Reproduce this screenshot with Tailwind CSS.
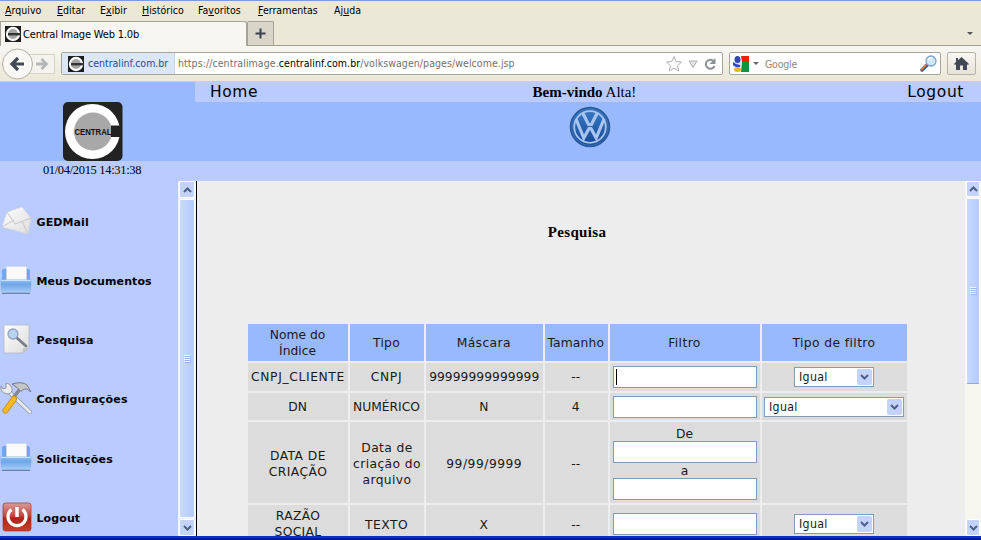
<!DOCTYPE html>
<html lang="pt-BR">
<head>
<meta charset="utf-8">
<title>Central Image Web 1.0b</title>
<script src="https://cdn.jsdelivr.net/npm/@tailwindcss/browser@4"></script>
</head>
<body class="w-[981px] h-[540px] overflow-hidden bg-[#ededed] text-black font-['DejaVu_Sans',sans-serif]">
<svg class="absolute w-0 h-0">
  <defs>
    <linearGradient id="tray" x1="0" y1="0" x2="0" y2="1"><stop offset="0" stop-color="#8fbdf2"/><stop offset=".4" stop-color="#6ea6e8"/><stop offset="1" stop-color="#a4cdf8"/></linearGradient>
    <linearGradient id="red" x1="0" y1="0" x2="0" y2="1"><stop offset="0" stop-color="#dc9a98"/><stop offset=".45" stop-color="#c04a42"/><stop offset=".55" stop-color="#b02418"/><stop offset="1" stop-color="#c8402c"/></linearGradient>
    <linearGradient id="vw" x1="0" y1="0" x2="0" y2="1"><stop offset="0" stop-color="#3a7cc4"/><stop offset="1" stop-color="#14499a"/></linearGradient>
    <linearGradient id="paper" x1="0" y1="0" x2="1" y2="1"><stop offset="0" stop-color="#ffffff"/><stop offset="1" stop-color="#dcdcdc"/></linearGradient>
    <symbol id="favicon" viewBox="0 0 16 16"><rect width="16" height="16" fill="#1d1d1d"/><circle cx="8" cy="8" r="7.2" fill="#fff"/><circle cx="8" cy="8" r="5" fill="#a5a5a5"/><path d="M3 7h13v2.4H3z" fill="#333"/></symbol>
    <symbol id="inbox" viewBox="0 0 32 30"><path d="M2 6q0-2 2-2h24q2 0 2 2v12H2z" fill="#6fa8ea"/><path d="M6.500 1.500h20v16h-20z" fill="#fafafa" stroke="#d0d6e0" stroke-width=".6"/><path d="M.5 14.500h31l-.5 11q0 2-2 2H3q-2 0-2-2z" fill="url(#tray)"/><path d="M1 15.500h30" stroke="#c9e2fc"/><path d="M2 28.300h28" stroke="#64789c" stroke-width="1.200"/></symbol>
    <symbol id="up" viewBox="0 0 9 6"><path d="M1 5l3.500-3.500L8 5" fill="none" stroke="#4d6185" stroke-width="2"/></symbol>
    <symbol id="down" viewBox="0 0 9 6"><path d="M1 1l3.500 3.500L8 1" fill="none" stroke="#4d6185" stroke-width="2"/></symbol>
  </defs>
</svg>

<div class="flex flex-col h-[540px]">
  <div class="h-px bg-[#7d9bd8] shrink-0"></div>
  <!-- Browser chrome -->
  <nav class="h-5 shrink-0 bg-[#ebe8d7] font-['DejaVu_Sans_Condensed','DejaVu_Sans',sans-serif] text-[10.5px] leading-[19px]">
    <ul class="flex pl-[5px] tracking-[0.03px]">
      <li class="w-[52px]"><u>A</u>rquivo</li><li class="w-[43px]"><u>E</u>ditar</li><li class="w-[42px]">E<u>x</u>ibir</li><li class="w-[56px]"><u>H</u>istórico</li><li class="w-[60px]">Fa<u>v</u>oritos</li><li class="w-[76px]"><u>F</u>erramentas</li><li>Aj<u>u</u>da</li>
    </ul>
  </nav>
  <div class="flex h-[25px] shrink-0 bg-[#ebe8d7] border-b border-[#a3a08f] font-['DejaVu_Sans_Condensed','DejaVu_Sans',sans-serif]">
    <div class="flex items-center w-[247px] h-[25px] pl-[4px] gap-[2px] bg-[#f7f6f1] border border-b-0 border-[#a5a297] rounded-tr-[3px]">
      <svg class="size-4"><use href="#favicon"/></svg>
      <span class="text-[11px] tracking-[-0.18px] pt-[3px]">Central Image Web 1.0b</span>
    </div>
    <div class="flex items-center justify-center w-[27px] h-[24px] bg-[#d9d6c9] border border-b-0 border-[#a5a297] rounded-t-[2px]">
      <svg class="size-[11px]" viewBox="0 0 11 11"><path d="M5.500.5v10M.5 5.500h10" stroke="#3c424c" stroke-width="2"/></svg>
    </div>
    <svg class="ml-auto mr-[8px] mt-[11px] w-[6px] h-[3px]" viewBox="0 0 6 3"><path d="M0 0h6L3 3z" fill="#555"/></svg>
  </div>
  <div class="flex items-center h-[36px] shrink-0 bg-linear-to-b from-[#f7f6f1] to-[#ebe8d7] border-b border-[#d4cfae] pl-[2px] font-['DejaVu_Sans_Condensed','DejaVu_Sans',sans-serif]">
    <svg class="w-[54px] h-[34px] shrink-0" viewBox="0 0 54 34"><path d="M26 7.500h26.500v19H26" fill="#f4f3ee" stroke="#d5d2c6"/><circle cx="15.500" cy="17" r="15" fill="#f9f8f5" stroke="#b3b0a6"/><path d="M22 17H11M16 11l-6 6 6 6" fill="none" stroke="#414a59" stroke-width="3.200"/><path d="M34 17h9M39.500 12l5 5-5 5" fill="none" stroke="#b5b6b7" stroke-width="2.800"/></svg>
    <div class="flex items-center ml-[5px] w-[662px] h-[23px] bg-white border border-[#a5a49d] rounded-[2px] text-[10.5px]">
      <div class="flex items-center h-full w-[113px] pl-[6px] gap-1 bg-[#dbe6f7] border-r border-[#c3d3ec] text-[#2c4b87]"><svg class="size-4 shrink-0"><use href="#favicon"/></svg><span class="pt-px">centralinf.com.br</span></div>
      <div class="pl-[3px] pt-px tracking-[0.07px] text-[#707070] whitespace-nowrap"><span>https://centralimage.</span><span class="text-black">centralinf.com.br</span><span>/volkswagen/pages/welcome.jsp</span></div>
      <svg class="ml-auto mr-[5px] w-[52px] h-[18px]" viewBox="0 0 52 18"><path d="M9 1.500l2.200 5 5.300.5-4 3.700 1.200 5.300L9 13.200 4.300 16l1.200-5.300-4-3.700 5.300-.5z" fill="#fafafa" stroke="#b0b0b0"/><path d="M24 6h8l-4 6.500z" fill="#e4e4e4" stroke="#b0b0b0"/><path d="M48.500 6A4.500 4.500 0 1 0 49.500 11" fill="none" stroke="#8b9097" stroke-width="2"/><path d="M50.500 3v6h-6z" fill="#8b9097"/></svg>
    </div>
    <div class="flex items-center ml-[6px] w-[212px] h-[23px] pl-[3px] bg-white border border-[#a5a49d] rounded-[2px]">
      <svg class="size-4 shrink-0" viewBox="0 0 16 16"><path d="M8 0h8v6H9z" fill="#f02010"/><path d="M9 6h7v10H8z" fill="#149040"/><path d="M0 6h8v5H0z" fill="#d4e2f8"/><ellipse cx="4.500" cy="3.500" rx="3" ry="3.500" fill="#2350b4"/><path d="M0 6l3 2 4 1v2H3L0 9z" fill="#2350b4"/><ellipse cx="4.500" cy="13.500" rx="3.500" ry="2.500" fill="#f2b41c"/></svg>
      <svg class="ml-1 w-[6px] h-[3px]" viewBox="0 0 6 3"><path d="M0 0h6L3 3z" fill="#666"/></svg>
      <span class="ml-[6px] pt-[2px] text-[10.5px] tracking-[-0.2px] text-[#8a8876]">Google</span>
      <svg class="ml-auto mr-[3px] size-[17px]" viewBox="0 0 17 17"><path d="M7 10l-5 5" stroke="#3e4a8c" stroke-width="3.500" stroke-linecap="round"/><path d="M6 10l-4.500 4.500" stroke="#e07840" stroke-width="2" stroke-linecap="round"/><circle cx="11" cy="6" r="5" fill="#cfe8fc" stroke="#7ba0d4" stroke-width="1.300"/><path d="M8 5q1-2.500 4-2.500" stroke="#fff" stroke-width="1.500" fill="none"/></svg>
    </div>
    <div class="flex items-center justify-center ml-[6px] w-[29px] h-[23px] bg-linear-to-b from-[#f8f7f3] to-[#e6e3d8] border border-[#b5b2a6] rounded-[2px]">
      <svg class="w-[15px] h-[13px]" viewBox="0 0 15 13"><path d="M7.500 0L15 7l-1 1-1-.8V13H9V8.500H6V13H2V7.200L1 8 0 7l2-1.900V1h2v2.200z" fill="#414856"/></svg>
    </div>
  </div>

  <!-- Page header -->
  <header class="flex h-[99px] shrink-0">
    <div class="w-[195px] flex flex-col bg-[#99b9ff]">
      <svg class="ml-[63px] mt-[20px] w-[60px] h-[59px] shrink-0" viewBox="0 0 60 59"><rect width="59.500" height="59" rx="5" fill="#222"/><circle cx="29.500" cy="29.500" r="27.500" fill="#fff"/><circle cx="30" cy="29.500" r="19" fill="#a8a8a8"/><path d="M48 23.500h11V35H48z" fill="#222"/><text x="11.500" y="33" textLength="37" lengthAdjust="spacingAndGlyphs" font-family="Liberation Sans" font-weight="bold" font-size="9.500" fill="#111">CENTRAL</text></svg>
      <div class="h-5 bg-[#b9cbff] text-center pr-[11px] leading-[18px] text-[12.5px] tracking-[-0.33px] font-['Liberation_Serif',serif]">01/04/2015 14:31:38</div>
    </div>
    <div class="flex-1 flex flex-col bg-[#99b9ff]">
      <div class="grid grid-cols-3 h-5 bg-[#b9cbff] pl-[15px] pr-[17px] leading-[21px] text-[15.5px] tracking-[0.6px]">
        <span>Home</span>
        <span class="text-center pr-[5px] tracking-normal font-['Liberation_Serif',serif] text-[15px]"><b>Bem-vindo</b> Alta!</span>
        <span class="text-right">Logout</span>
      </div>
      <svg class="mx-auto mt-1 relative left-[2px] size-[42px] shrink-0" viewBox="0 0 42 42"><circle cx="21" cy="21" r="20.300" fill="#28589c"/><circle cx="21" cy="21" r="18.300" fill="url(#vw)" stroke="#3c70b4" stroke-width="1"/><circle cx="21" cy="21" r="15.800" fill="none" stroke="#a9c4ee" stroke-width="1.800"/><path d="M13.800 7l5.700 11.500h3L28.200 7M7 13l7.800 19L20 22.500h2L27.200 32 35 13" fill="none" stroke="#a9c4ee" stroke-width="3.200"/></svg>
      <div class="h-5 mt-auto bg-[#b9cbff] shrink-0"></div>
    </div>
  </header>

  <main class="flex h-[355px] shrink-0">
    <aside class="w-[178px] bg-[#b9cbff] text-[11px] font-bold tracking-[0.1px] pt-[10px] overflow-hidden">
      <ul>
        <li class="flex items-center h-[59.2px] gap-[4.5px]"><svg class="w-8 h-[32px]" viewBox="0 0 32 32"><path d="M7 7L22 2l9 11-3 16L2 22z" fill="url(#paper)" stroke="#d5d5d8" stroke-width=".7"/><path d="M7 7l8 12 16-6M2 22l12-7M28 29l-6-13" fill="none" stroke="#c8c8cc" stroke-width="1"/></svg><span class="pt-[5px]">GEDMail</span></li>
        <li class="flex items-center h-[59.2px] gap-[4.5px]"><svg class="w-8 h-[30px]"><use href="#inbox"/></svg><span class="pt-[4px]">Meus Documentos</span></li>
        <li class="flex items-center h-[59.2px] gap-[4.5px]"><svg class="w-8 h-[32px]" viewBox="0 0 32 32"><path d="M4 2h25v23l-6 5H4z" fill="url(#paper)" stroke="#b5b8c0" stroke-width=".8"/><path d="M29 25h-6v5z" fill="#c4c4c8"/><path d="M17 15l9 8" stroke="#777d88" stroke-width="2.800" stroke-linecap="round"/><circle cx="13" cy="11" r="5" fill="#b9d3f5" stroke="#94a3ba" stroke-width="1.300"/></svg><span class="pt-[4px] tracking-[0.2px]">Pesquisa</span></li>
        <li class="flex items-center h-[59.2px] gap-[4.5px]"><svg class="w-8 h-[34px]" viewBox="0 0 32 34"><path d="M9 11l21 20" stroke="#8d939c" stroke-width="4.200" stroke-linecap="round"/><path d="M9 11l21 20" stroke="#e6e8ec" stroke-width="3" stroke-linecap="round"/><path d="M6 2v5L3 8 1 5Q0 12 8 13q5-1 4-6-2-5-6-5" fill="#ececec" stroke="#888" stroke-width=".8"/><path d="M20 8L13 17" stroke="#85898f" stroke-width="3.500"/><path d="M14 18L5.500 29.500" stroke="#c98a10" stroke-width="6" stroke-linecap="round"/><path d="M14 18L5.500 29.500" stroke="#f9b91f" stroke-width="4.500" stroke-linecap="round"/><path d="M12 3Q22 0 27 4l4 7q-4-4-7-3l-3 2.500-4-4z" fill="#c4c6c8" stroke="#6e7278" stroke-width=".9"/></svg><span class="pt-[4px] tracking-[0.2px]">Configurações</span></li>
        <li class="flex items-center h-[59.2px] gap-[4.5px]"><svg class="w-8 h-[30px]"><use href="#inbox"/></svg><span class="pt-[5px] tracking-[0.2px]">Solicitações</span></li>
        <li class="flex items-center h-[59.2px] gap-[4.5px]"><svg class="w-8 h-[30px]" viewBox="0 0 32 30"><rect x="3" y="1" width="28" height="28" rx="2.500" fill="url(#red)" stroke="#a8372d" stroke-width=".7"/><path d="M11.500 7.500a9 9 0 1 0 11 0" fill="none" stroke="#fff" stroke-width="3.200"/><path d="M17 5v10" stroke="#fff" stroke-width="3.400"/></svg><span class="pt-[5px]">Logout</span></li>
      </ul>
    </aside>
    <div class="flex flex-col w-[18px] px-px gap-px bg-[#eef2fe]">
      <div class="flex items-center justify-center h-[17px] bg-[#c3d3fc] border border-white rounded-[2px]"><svg class="w-[9px] h-[6px]"><use href="#up"/></svg></div>
      <div class="flex items-center justify-center h-[319px] bg-linear-to-r from-[#c9d9fe] to-[#b5cbfd] border border-white rounded-[2px]"><svg class="w-[7px] h-[8px]" viewBox="0 0 7 8"><path d="M0 .5h6M0 2.500h6M0 4.500h6M0 6.500h6" stroke="#f0f5ff"/><path d="M1 1.500h6M1 3.500h6M1 5.500h6M1 7.500h6" stroke="#9ab5f0"/></svg></div>
      <div class="flex items-center justify-center h-[17px] bg-[#c3d3fc] border border-white rounded-[2px]"><svg class="w-[9px] h-[6px]"><use href="#down"/></svg></div>
    </div>
    <section class="flex-1 min-w-0 border-l border-l-black bg-[#ededed] overflow-hidden pl-[51px]">
      <h1 class="mt-[41px] h-[102px] pr-[59px] text-center text-[15px] tracking-[0.35px] leading-5 font-bold font-['Liberation_Serif',serif]">Pesquisa</h1>
      <div class="grid grid-cols-[100px_74px_116.5px_63.5px_150px_145px] grid-rows-[37px_28px_27px_81px_38px] gap-[2px] w-[659px] text-[12.3px] leading-4 text-center text-[#1a1a1a] *:flex *:items-center *:justify-center *:bg-[#dcdcdc] *:pr-px">
        <div class="bg-[#99b9ff]! pt-px">Nome do<br>Índice</div><div class="bg-[#99b9ff]! tracking-[0.3px]">Tipo</div><div class="bg-[#99b9ff]! tracking-[0.4px]">Máscara</div><div class="bg-[#99b9ff]! tracking-[0.15px]">Tamanho</div><div class="bg-[#99b9ff]! tracking-[0.4px]">Filtro</div><div class="bg-[#99b9ff]! tracking-[0.4px]">Tipo de filtro</div>

        <div class="tracking-[0.63px] pl-px">CNPJ_CLIENTE</div><div class="tracking-[0.7px]">CNPJ</div><div class="tracking-[0.05px] pl-px">99999999999999</div><div>--</div>
        <div><div class="flex items-center w-[144px] h-[22px] bg-white border border-[#7f9db9] pl-[2px]"><i class="w-px h-4 bg-black"></i></div></div>
        <div><div class="flex items-center justify-between w-[80px] h-[20px] bg-white border border-[#7f9db9] pl-1 pr-px tracking-[0.3px] font-['DejaVu_Sans_Condensed','DejaVu_Sans',sans-serif]">Igual<span class="flex items-center justify-center w-[15px] h-4 bg-[#c3d3fc] rounded-[2px]"><svg class="w-[9px] h-[6px]"><use href="#down"/></svg></span></div></div>

        <div>DN</div><div>NUMÉRICO</div><div>N</div><div>4</div>
        <div><div class="w-[144px] h-[22px] bg-white border border-[#7f9db9]"></div></div>
        <div><div class="flex items-center justify-between w-[140px] h-[20px] bg-white border border-[#7f9db9] pl-1 pr-px tracking-[0.3px] font-['DejaVu_Sans_Condensed','DejaVu_Sans',sans-serif]">Igual<span class="flex items-center justify-center w-[15px] h-4 bg-[#c3d3fc] rounded-[2px]"><svg class="w-[9px] h-[6px]"><use href="#down"/></svg></span></div></div>

        <div class="tracking-[0.45px] pt-[2px] pl-px">DATA DE<br>CRIAÇÃO</div><div class="tracking-[0.4px] pt-[2px] pl-px">Data de<br>criação do<br>arquivo</div><div class="tracking-[0.5px] pt-[2px] pl-px">99/99/9999</div><div class="pt-[2px]">--</div>
        <div class="flex-col pt-px"><span class="h-[15px]">De</span><div class="w-[144px] h-[22px] bg-white border border-[#7f9db9]"></div><span class="h-[15px]">a</span><div class="w-[144px] h-[22px] bg-white border border-[#7f9db9]"></div></div>
        <div></div>

        <div class="tracking-[0.3px] pl-px">RAZÃO<br>SOCIAL</div><div class="tracking-[0.5px] pt-px">TEXTO</div><div class="pt-px">X</div><div class="pt-px">--</div>
        <div><div class="w-[144px] h-[22px] bg-white border border-[#7f9db9]"></div></div>
        <div><div class="flex items-center justify-between w-[80px] h-[20px] bg-white border border-[#7f9db9] pl-1 pr-px tracking-[0.3px] font-['DejaVu_Sans_Condensed','DejaVu_Sans',sans-serif]">Igual<span class="flex items-center justify-center w-[15px] h-4 bg-[#c3d3fc] rounded-[2px]"><svg class="w-[9px] h-[6px]"><use href="#down"/></svg></span></div></div>
      </div>
    </section>
    <div class="flex flex-col w-[16px] px-px gap-px bg-[#f6f5ee]">
      <div class="flex items-center justify-center h-[16px] bg-[#c3d3fc] border border-white rounded-[2px]"><svg class="w-[9px] h-[6px]"><use href="#up"/></svg></div>
      <div class="flex items-center justify-center h-[186px] bg-linear-to-r from-[#c9d9fe] to-[#b5cbfd] border border-white border-b-[#8aa9e8] rounded-[2px]"><svg class="w-[7px] h-[8px]" viewBox="0 0 7 8"><path d="M0 .5h6M0 2.500h6M0 4.500h6M0 6.500h6" stroke="#f0f5ff"/><path d="M1 1.500h6M1 3.500h6M1 5.500h6M1 7.500h6" stroke="#9ab5f0"/></svg></div>
      <div class="flex items-center justify-center mt-auto h-[17px] bg-[#c3d3fc] border border-white rounded-[2px]"><svg class="w-[9px] h-[6px]"><use href="#down"/></svg></div>
    </div>
  </main>
  <footer class="h-1 shrink-0 bg-[#0831c8] border-b-2 border-[#001a9a]"></footer>
</div>
</body>
</html>
